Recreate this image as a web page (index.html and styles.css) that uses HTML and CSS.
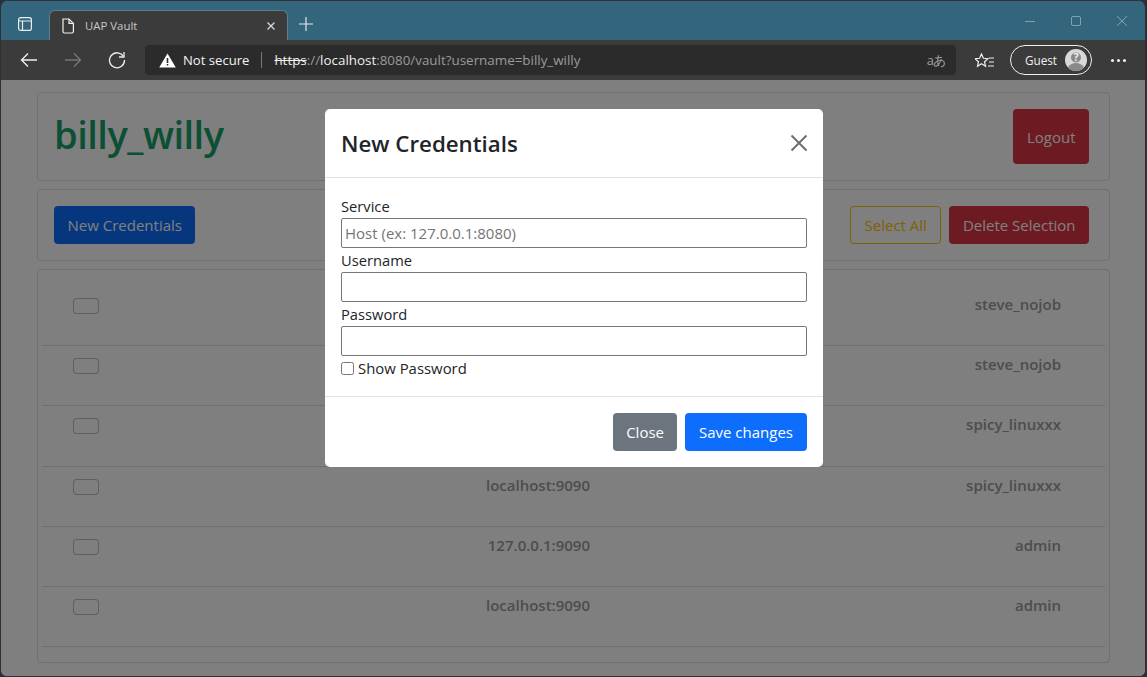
FILE: index.html
```html
<!DOCTYPE html>
<html>
<head lang="en">
    <meta charset="UTF-8">
    <title>UAP Vault</title>
    <link rel="stylesheet" href="styles.css">
</head>
<body>
<div class="window">
    <div class="titlebar">
        <svg class="tabs-icon" width="16" height="16" viewBox="0 0 16 16" fill="none" stroke="#e8eef0" stroke-width="1.2">
            <rect x="1.6" y="1.6" width="12.8" height="12.8" rx="2.2"/>
            <path d="M1.6 5h12.8M5.5 5v9.4"/>
        </svg>
        <div class="tab">
            <svg width="14" height="16" viewBox="0 0 14 16" fill="none" stroke="#f2f2f2" stroke-width="1.2">
                <path d="M2 1h6l4.400 4.400V13.500a1.500 1.500 0 0 1-1.500 1.500H3.500A1.500 1.500 0 0 1 2 13.500z"/>
                <path d="M8 1v4.400h4.400"/>
            </svg>
            <span class="tab-title">UAP Vault</span>
            <svg class="tab-close" width="10" height="10" viewBox="0 0 10 10" stroke="#d8d8d8" stroke-width="1.300">
                <path d="M1.500 1.500l7 7M8.500 1.500l-7 7"/>
            </svg>
        </div>
        <svg class="new-tab" width="16" height="16" viewBox="0 0 16 16" stroke="#e0e8eb" stroke-width="1.200">
            <path d="M8 1v14M1 8h14"/>
        </svg>
        <div class="win-controls">
            <svg width="12" height="12" viewBox="0 0 12 12" stroke="#7fa3b2" stroke-width="1"><path d="M1 6.500h10"/></svg>
            <svg width="12" height="12" viewBox="0 0 12 12" fill="none" stroke="#7fa3b2" stroke-width="1"><rect x="1.500" y="1.500" width="9" height="9" rx="1.500"/></svg>
            <svg width="12" height="12" viewBox="0 0 12 12" stroke="#7fa3b2" stroke-width="1"><path d="M1 1l10 10M11 1L1 11"/></svg>
        </div>
    </div>

    <div class="toolbar">
        <div class="nav-btns">
            <svg width="18" height="16" viewBox="0 0 18 16" fill="none" stroke="#f0f0f0" stroke-width="1.300"><path d="M17 8H1.500M8 1.500L1.500 8 8 14.500"/></svg>
            <svg width="18" height="16" viewBox="0 0 18 16" fill="none" stroke="#777" stroke-width="1.300"><path d="M1 8h15.500M10 1.500L16.500 8 10 14.500"/></svg>
            <svg width="18" height="18" viewBox="0 0 18 18" fill="none" stroke="#f0f0f0" stroke-width="1.300"><path d="M15.500 5.500A7.500 7.500 0 1 0 16.500 9"/><path d="M16 1v5h-5"/></svg>
        </div>
        <div class="addressbar">
            <svg width="17" height="15" viewBox="0 0 17 15"><path d="M8.500 .5L16.800 14.500H.2z" fill="#fff"/><path d="M7.700 5h1.600v5H7.700zM7.700 11h1.600v1.600H7.700z" fill="#2b2b2b"/></svg>
            <span class="not-secure">Not secure</span>
            <span class="addr-divider"></span>
            <span class="url"><s>https</s>://<b>localhost</b>:8080/vault?username=billy_willy</span>
            <span class="read-aloud">aあ</span>
        </div>
        <svg class="fav" width="20" height="18" viewBox="0 0 20 18" fill="none" stroke="#f0f0f0" stroke-width="1.200">
            <path d="M7.500 1.500l1.900 4.300 4.600.4-3.500 3 1 4.500-4-2.400-4 2.400 1-4.500-3.500-3 4.600-.4z" transform="translate(-1 1.500)"/>
            <path d="M14 7h5M14 11h5M13 15h6"/>
        </svg>
        <div class="guest">
            <span>Guest</span>
            <svg width="22" height="22" viewBox="0 0 22 22">
                <circle cx="11" cy="11" r="11" fill="#d9d9d9"/>
                <path d="M3 18.500c2-3.500 5-4.500 8-4.500s6 1 8 4.500A11 11 0 0 1 3 18.500z" fill="#8a8a8a"/>
                <circle cx="11" cy="8.500" r="5" fill="#8a8a8a"/>
                <text x="11" y="12" text-anchor="middle" class="guest-mark">?</text>
            </svg>
        </div>
        <div class="more"><i></i><i></i><i></i></div>
    </div>

    <div class="page">
        <div class="card card-head">
            <h1 class="user-name">billy_willy</h1>
            <button class="btn btn-danger btn-logout">Logout</button>
        </div>
        <div class="card card-actions">
            <button class="btn btn-primary">New Credentials</button>
            <div class="actions-right">
                <button class="btn btn-outline-warning">Select All</button>
                <button class="btn btn-danger btn-delete">Delete Selection</button>
            </div>
        </div>
        <div class="card card-list">
            <div class="cred-row"><span class="check-box"></span><span class="cred-host">127.0.0.1:8080</span><span class="cred-user">steve_nojob</span></div>
            <div class="cred-row"><span class="check-box"></span><span class="cred-host">localhost:8080</span><span class="cred-user">steve_nojob</span></div>
            <div class="cred-row"><span class="check-box"></span><span class="cred-host">127.0.0.1:9090</span><span class="cred-user">spicy_linuxxx</span></div>
            <div class="cred-row"><span class="check-box"></span><span class="cred-host">localhost:9090</span><span class="cred-user">spicy_linuxxx</span></div>
            <div class="cred-row"><span class="check-box"></span><span class="cred-host">127.0.0.1:9090</span><span class="cred-user">admin</span></div>
            <div class="cred-row"><span class="check-box"></span><span class="cred-host">localhost:9090</span><span class="cred-user">admin</span></div>
        </div>

        <div class="backdrop"></div>
        <div class="modal">
            <div class="modal-header">
                <h5 class="modal-title">New Credentials</h5>
                <svg width="18" height="18" viewBox="0 0 18 18" stroke="#6f6f6f" stroke-width="2"><path d="M1.500 1.500l15 15M16.500 1.500l-15 15"/></svg>
            </div>
            <div class="modal-body">
                <label class="field-label">Service</label>
                <input class="field" type="text" placeholder="Host (ex: 127.0.0.1:8080)">
                <label class="field-label">Username</label>
                <input class="field" type="text">
                <label class="field-label">Password</label>
                <input class="field" type="password">
                <label class="show-pass"><input type="checkbox"> Show Password</label>
            </div>
            <div class="modal-footer">
                <button class="btn btn-secondary">Close</button>
                <button class="btn btn-save">Save changes</button>
            </div>
        </div>
    </div>
</div>
</body>
</html>
```

FILE: styles.css
```css
*
{
    margin: 0;
    padding: 0;
    box-sizing: border-box;
}
html, body
{
    height: 100%;
    overflow: hidden;
}
body
{
    background: #2c3034;
    font-family: "Open Sans", "Noto Sans", sans-serif;
    font-size: 15px;
    color: #212529;
}
.window
{
    height: 676px;
    margin: 0 2px 0 1px;
    border-radius: 8px 8px 6px 6px;
    overflow: hidden;
    display: flex;
    flex-direction: column;
}

/*----title bar----*/
.titlebar
{
    height: 40px;
    flex: none;
    background: #33667c;
    border-top: 1px solid #2c3034;
    display: flex;
    align-items: flex-end;
    padding-left: 16px;
}
.tabs-icon
{
    margin-bottom: 8px;
}
.tab
{
    width: 239px;
    height: 30px;
    margin-left: 16px;
    background: #3b3b3b;
    border: 1px solid #5f7c88;
    border-bottom: 0;
    border-radius: 6px 6px 0 0;
    display: flex;
    align-items: center;
    padding-left: 11px;
    padding-right: 11px;
}
.tab-title
{
    margin-left: 10px;
    font-size: 11.400px;
    color: #c8c8c8;
    flex: 1;
}
.new-tab
{
    margin: 0 0 8px 10px;
}
.win-controls
{
    margin-left: auto;
    align-self: flex-start;
    margin-top: 14px;
    display: flex;
    gap: 34px;
    padding-right: 17px;
}

/*----toolbar----*/
.toolbar
{
    height: 40px;
    flex: none;
    background: #3b3b3b;
    display: flex;
    align-items: center;
}
.nav-btns
{
    width: 144px;
    padding-left: 19px;
    display: flex;
    align-items: center;
    gap: 26px;
}
.addressbar
{
    width: 811px;
    height: 30px;
    background: #2b2b2b;
    border-radius: 4px;
    display: flex;
    align-items: center;
    padding: 0 11px 0 14px;
}
.not-secure
{
    margin-left: 7px;
    font-size: 13.100px;
    color: #f4f4f4;
}
.addr-divider
{
    width: 1px;
    height: 16px;
    background: #777;
    margin: 0 12px;
}
.url
{
    font-size: 13.400px;
    color: #9a9a9a;
    flex: 1;
}
.url s, .url b
{
    font-weight: normal;
    color: #eee;
}
.read-aloud
{
    font-size: 13px;
    letter-spacing: -1px;
    color: #a0a0a0;
}
.fav
{
    margin-left: 19px;
}
.guest
{
    width: 82px;
    height: 30px;
    margin-left: 15px;
    border: 1px solid #f0f0f0;
    border-radius: 15px;
    display: flex;
    align-items: center;
    justify-content: space-between;
    padding: 0 4px 0 14px;
    font-size: 11.700px;
    color: #f0f0f0;
}
.guest-mark
{
    font-size: 11px;
    font-weight: bold;
    fill: #eee;
}
.more
{
    margin-left: 19px;
    display: flex;
    gap: 3px;
}
.more i
{
    width: 3px;
    height: 3px;
    border-radius: 50%;
    background: #f0f0f0;
}

/*----page----*/
.page
{
    position: relative;
    flex: 1;
    background: #fff;
    padding: 12px 35px 0 36px;
    overflow: hidden;
}
.card
{
    border: 1px solid rgba(0, 0, 0, .125);
    border-radius: 4px;
    margin-bottom: 8px;
}
.card-head
{
    height: 89px;
    display: flex;
    justify-content: space-between;
    align-items: center;
    padding: 0 20px 0 16px;
}
.user-name
{
    font-size: 38px;
    font-weight: 600;
    letter-spacing: -.5px;
    line-height: 1;
    margin-top: -6px;
    color: #18a068;
}
.card-actions
{
    height: 72px;
    display: flex;
    justify-content: space-between;
    align-items: center;
    padding: 0 20px 0 16px;
}
.actions-right
{
    display: flex;
    gap: 8px;
}
.card-list
{
    height: 394px;
    padding: 16px 4px 0 4px;
}
.cred-row
{
    height: 60.200px;
    border-bottom: 1px solid rgba(0, 0, 0, .125);
    display: grid;
    grid-template-columns: 150px 398px 1fr;
    font-weight: 600;
    font-size: 15px;
    padding-top: 8px;
    color: #9a9a9a;
}
.cred-host
{
    text-align: right;
}
.cred-user
{
    text-align: right;
    padding-right: 44px;
}
.check-box
{
    width: 26px;
    height: 16px;
    margin: 4px 0 0 31px;
    border: 1px solid rgba(0, 0, 0, .25);
    border-radius: 4px;
    background: #fff;
}

/*----buttons----*/
.btn
{
    font-family: inherit;
    font-size: 15px;
    height: 38px;
    padding: 0 13px;
    border: 1px solid transparent;
    border-radius: 4px;
    color: #fff;
}
.btn-primary, .btn-save
{
    background: #0d6efd;
}
.btn-primary
{
    padding: 0 12.500px;
}
.btn-danger
{
    background: #dc3545;
}
.btn-logout
{
    height: 55px;
    padding: 0 12.500px;
}
.btn-delete
{
    padding: 0 12.500px;
}
.btn-secondary
{
    background: #6c757d;
    padding: 0 12px;
}
.btn-outline-warning
{
    background: transparent;
    border-color: #ffc107;
    color: #ffc107;
    padding: 0 13.500px;
}

/*----modal----*/
.backdrop
{
    position: absolute;
    top: 0;
    left: 0;
    right: 0;
    bottom: 0;
    background: rgba(0, 0, 0, .5);
}
.modal
{
    position: absolute;
    left: 324px;
    top: 29px;
    width: 498px;
    height: 358px;
    background: #fff;
    border-radius: 5px;
    display: flex;
    flex-direction: column;
}
.modal-header
{
    height: 69px;
    flex: none;
    border-bottom: 1px solid #dee2e6;
    display: flex;
    align-items: center;
    justify-content: space-between;
    padding: 0 15px 0 16px;
}
.modal-title
{
    font-size: 22.300px;
    font-weight: 600;
}
.modal-body
{
    flex: 1;
    padding: 17px 16px 0;
}
.field-label
{
    display: block;
    font-size: 14.700px;
    line-height: 23px;
}
.field
{
    display: block;
    width: 100%;
    height: 30px;
    margin-bottom: 1px;
    padding: 0 3px;
    border: 1px solid #767676;
    border-radius: 2px;
    font-family: inherit;
    font-size: 15px;
}
.field::placeholder
{
    color: #757575;
}
.show-pass
{
    display: flex;
    align-items: center;
    gap: 4px;
    font-size: 14.900px;
    line-height: 22px;
}
.show-pass input
{
    width: 13px;
    height: 13px;
}
.modal-footer
{
    height: 71px;
    flex: none;
    border-top: 1px solid #dee2e6;
    display: flex;
    justify-content: flex-end;
    align-items: center;
    gap: 8px;
    padding: 0 16px;
}
```
